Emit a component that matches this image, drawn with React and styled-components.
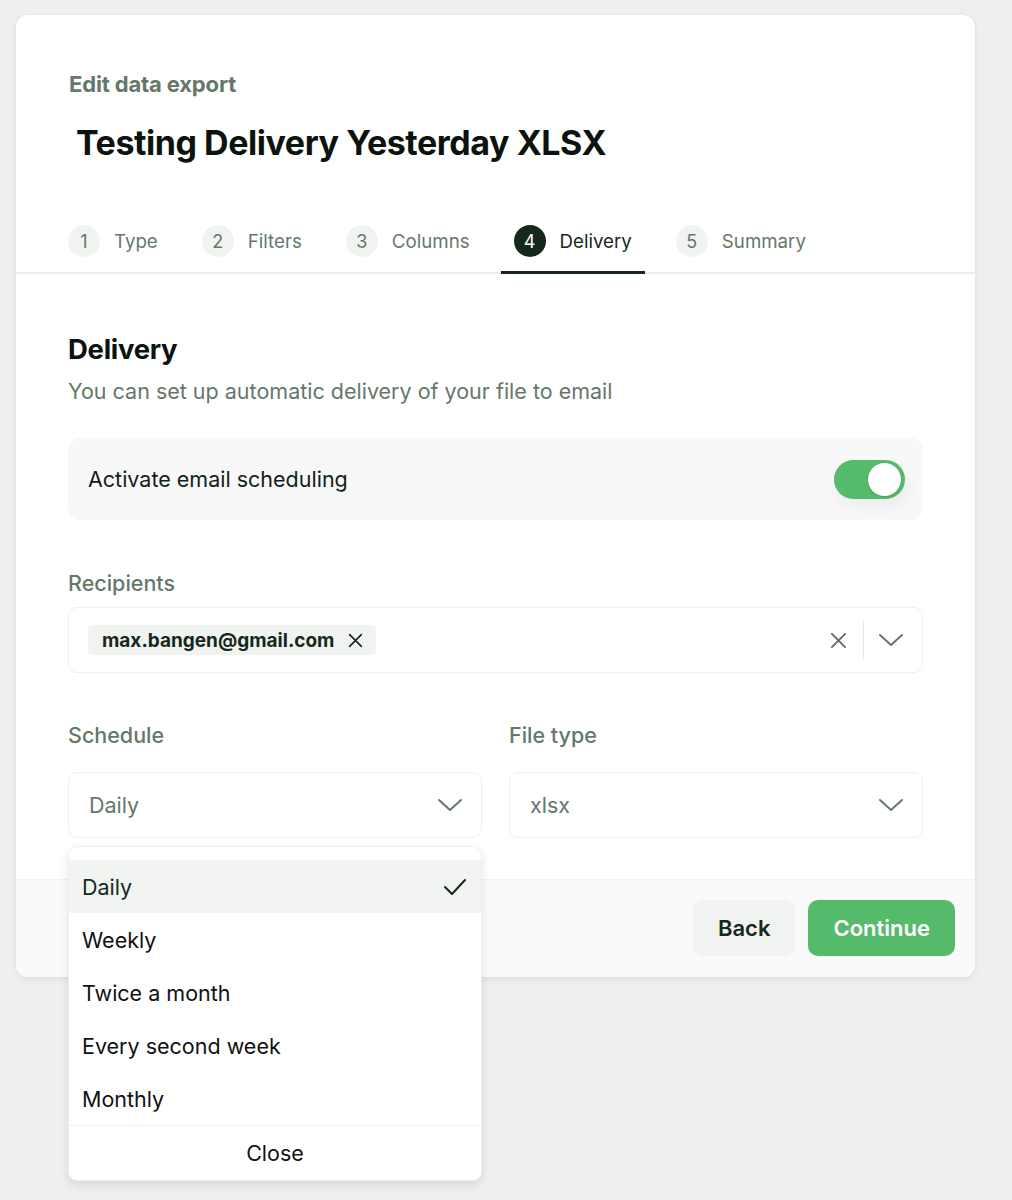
import React, { useState } from 'react'
import styled, { createGlobalStyle } from 'styled-components'

const Global = createGlobalStyle`
  body {
    margin: 0;
    background: #eef0ee;
    font-family: Inter, "Noto Sans", sans-serif;
    color: #0f1a13;
  }
`

const Page = styled.div`
  padding: 15px 0 40px 16px;
  min-height: 1200px;
  box-sizing: border-box;
`

const Card = styled.div`
  width: 959px;
  background: #fff;
  border-radius: 12px;
  box-shadow: 0 2px 6px rgba(0, 0, 0, 0.08), 0 0 1px rgba(0, 0, 0, 0.06);
`

const Header = styled.div`
  padding: 56px 52px 0 53px;
  border-bottom: 2px solid #eceeec;
`

const Eyebrow = styled.div`
  font-size: 22px;
  font-weight: 700;
  color: #647869;
  letter-spacing: -0.15px;
`

const Title = styled.h1`
  margin: 25px 0 0 7px;
  font-size: 34px;
  font-weight: 700;
  letter-spacing: -0.45px;
  color: #0c130e;
`

const Tabs = styled.div`
  display: flex;
  gap: 18px;
  margin: 62px 0 0 -14px;
`

const Tab = styled.div`
  display: flex;
  align-items: center;
  gap: 14px;
  padding: 0 13px 14px;
  margin-bottom: -2px;
  border-bottom: 3px solid ${p => (p.active ? '#16281c' : 'transparent')};
  font-size: 18.7px;
  color: ${p => (p.active ? '#16281c' : '#647869')};
`

const StepNum = styled.span`
  width: 32px;
  height: 32px;
  border-radius: 50%;
  display: flex;
  align-items: center;
  justify-content: center;
  font-size: 18px;
  background: ${p => (p.active ? '#16281c' : '#f1f3f1')};
  color: ${p => (p.active ? '#fff' : '#647869')};
`

const Body = styled.div`
  padding: 58px 52px 41px 52px;
`

const SectionTitle = styled.h2`
  margin: 0;
  font-size: 27.5px;
  font-weight: 700;
  letter-spacing: -0.3px;
  color: #0c130e;
`

const SectionSub = styled.p`
  margin: 12px 0 0;
  font-size: 21.5px;
  color: #647869;
`

const TogglePanel = styled.div`
  margin-top: 34px;
  height: 82px;
  border-radius: 12px;
  background: #f7f8f7;
  display: flex;
  align-items: center;
  justify-content: space-between;
  padding: 0 18px 0 20px;
  font-size: 21.5px;
  color: #13201a;
`

const Switch = styled.div`
  width: 71px;
  height: 39px;
  border-radius: 20px;
  background: #55bb6b;
  display: flex;
  align-items: center;
  justify-content: flex-end;
  padding: 0 4px;
  box-sizing: border-box;
  box-shadow: 4px 8px 16px rgba(0, 0, 0, 0.05);
`

const Knob = styled.span`
  width: 33px;
  height: 33px;
  border-radius: 50%;
  background: #fff;
  box-shadow: 0 1px 3px rgba(0, 0, 0, 0.15);
`

const Field = styled.div`
  position: relative;
  margin-top: ${p => p.top || 0}px;
`

const Label = styled.div`
  font-size: 21.5px;
  font-weight: 500;
  color: #647869;
  margin-bottom: ${p => p.gap || 11}px;
`

const Box = styled.div`
  height: 66px;
  box-sizing: border-box;
  border: 1px solid #eef0ee;
  border-radius: 9px;
  display: flex;
  align-items: center;
  padding: 0 18px 0 20px;
  font-size: 21.5px;
  color: #647869;
`

const Chip = styled.span`
  display: inline-flex;
  align-items: center;
  gap: 14px;
  height: 30px;
  padding: 0 13px 0 14px;
  margin-left: -1px;
  border-radius: 4px;
  background: #f1f3f1;
  font-size: 19px;
  font-weight: 700;
  color: #16281c;
`

const Grow = styled.span`
  flex: 1;
`

const Divider = styled.span`
  width: 1px;
  height: 40px;
  background: #e6e9e6;
  margin: 0 14px 0 16px;
`

const Row = styled.div`
  display: grid;
  grid-template-columns: 1fr 1fr;
  gap: 27px;
  margin-top: 49px;
`

const Menu = styled.div`
  position: absolute;
  left: 0;
  right: 0;
  top: calc(100% + 8px);
  background: #fff;
  border: 1px solid #eef0ee;
  border-radius: 9px;
  box-shadow: 0 4px 10px rgba(0, 0, 0, 0.1);
  padding-top: 13px;
  z-index: 5;
  overflow: hidden;
`

const Option = styled.div`
  height: 53px;
  display: flex;
  align-items: center;
  justify-content: space-between;
  padding: 0 14px 0 13px;
  font-size: 21.5px;
  color: ${p => (p.selected ? '#16281c' : '#111')};
  background: ${p => (p.selected ? '#f2f4f2' : 'transparent')};
`

const CloseRow = styled.div`
  border-top: 1px solid #eef0ee;
  height: 54px;
  display: flex;
  align-items: center;
  justify-content: center;
  font-size: 21.5px;
  color: #111;
`

const Footer = styled.div`
  background: #fafafa;
  border-top: 1px solid #f0f1f0;
  border-radius: 0 0 12px 12px;
  padding: 20px 20px 21px;
  display: flex;
  justify-content: flex-end;
  gap: 13px;
`

const Button = styled.button`
  height: 56px;
  border: none;
  border-radius: 10px;
  padding: 0 25px;
  font-family: inherit;
  font-size: 22px;
  font-weight: 600;
  background: ${p => (p.primary ? '#55bb6b' : '#f1f3f1')};
  color: ${p => (p.primary ? '#fff' : '#16281c')};
`

const XIcon = ({ size = 18, color = '#16281c', w = 2 }) => (
  <svg width={size} height={size} viewBox="0 0 18 18" fill="none">
    <path d="M2 2L16 16M16 2L2 16" stroke={color} strokeWidth={w} strokeLinecap="round" />
  </svg>
)

const Chevron = ({ color = '#647869' }) => (
  <svg width="26" height="16" viewBox="0 0 26 16" fill="none">
    <path d="M2 3L13 13L24 3" stroke={color} strokeWidth="2" strokeLinecap="round" strokeLinejoin="round" />
  </svg>
)

const Check = () => (
  <svg width="24" height="20" viewBox="0 0 24 20" fill="none">
    <path d="M2 10L9 17L22 3" stroke="#16281c" strokeWidth="2" strokeLinecap="round" strokeLinejoin="round" />
  </svg>
)

const steps = ['Type', 'Filters', 'Columns', 'Delivery', 'Summary']
const options = ['Daily', 'Weekly', 'Twice a month', 'Every second week', 'Monthly']

export default function App() {
  const [schedule] = useState('Daily')
  return (
    <Page>
      <Global />
      <Card>
        <Header>
          <Eyebrow>Edit data export</Eyebrow>
          <Title>Testing Delivery Yesterday XLSX</Title>
          <Tabs>
            {steps.map((s, i) => (
              <Tab key={s} active={i === 3}>
                <StepNum active={i === 3}>{i + 1}</StepNum>
                {s}
              </Tab>
            ))}
          </Tabs>
        </Header>
        <Body>
          <SectionTitle>Delivery</SectionTitle>
          <SectionSub>You can set up automatic delivery of your file to email</SectionSub>
          <TogglePanel>
            Activate email scheduling
            <Switch>
              <Knob />
            </Switch>
          </TogglePanel>
          <Field top={50}>
            <Label>Recipients</Label>
            <Box>
              <Chip>
                max.bangen@gmail.com
                <XIcon size={15} />
              </Chip>
              <Grow />
              <XIcon size={17} color="#5d6f62" />
              <Divider />
              <Chevron />
            </Box>
          </Field>
          <Row>
            <Field>
              <Label gap={24}>Schedule</Label>
              <Box>
                <Grow>{schedule}</Grow>
                <Chevron />
              </Box>
              <Menu>
                {options.map(o => (
                  <Option key={o} selected={o === schedule}>
                    {o}
                    {o === schedule && <Check />}
                  </Option>
                ))}
                <CloseRow>Close</CloseRow>
              </Menu>
            </Field>
            <Field>
              <Label gap={24}>File type</Label>
              <Box>
                <Grow>xlsx</Grow>
                <Chevron />
              </Box>
            </Field>
          </Row>
        </Body>
        <Footer>
          <Button>Back</Button>
          <Button primary>Continue</Button>
        </Footer>
      </Card>
    </Page>
  )
}
